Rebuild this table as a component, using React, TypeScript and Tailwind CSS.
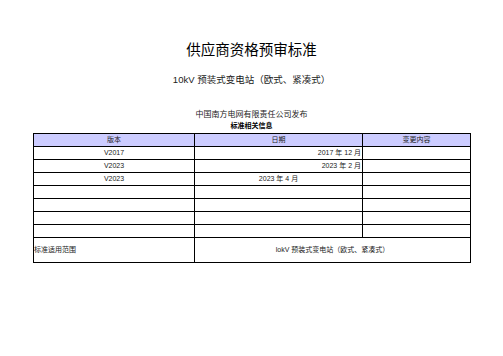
import React from "react";

const font = { fontFamily: '"Liberation Sans", "Noto Sans CJK SC", sans-serif' };

export default function App() {
  const rows: [string, string, "right" | "center"][] = [
    ["V2017", "2017 年 12 月", "right"],
    ["V2023", "2023 年 2 月", "right"],
    ["V2023", "2023 年 4 月", "center"],
    ["", "", "center"],
    ["", "", "center"],
    ["", "", "center"],
    ["", "", "center"],
  ];
  return (
    <div className="w-[503px] h-[356px] bg-white text-black" style={font}>
      <div className="pt-[42px] text-center text-[14.5px] leading-[16px] h-[58px]">供应商资格预审标准</div>
      <div className="mt-[16px] text-center text-[9.5px] leading-[12px] h-[12px] text-[#222]">10kV 预装式变电站（欧式、紧凑式）</div>
      <div className="mt-[24px] text-center text-[8px] leading-[10px] h-[10px] text-[#222]">中国南方电网有限责任公司发布</div>
      <div className="mt-[2px] text-center text-[7px] leading-[8px] h-[8px] font-bold">标准相关信息</div>
      <div className="mt-[3px] ml-[33px] w-[438px] border border-black text-[7px] text-[#222]">
        <div className="flex h-[13px] bg-[#ccccff] border-b border-black">
          <div className="w-[161px] border-r border-black flex items-center justify-center">版本</div>
          <div className="w-[168px] border-r border-black flex items-center justify-center">日期</div>
          <div className="flex-1 flex items-center justify-center">变更内容</div>
        </div>
        {rows.map((r, i) => (
          <div key={i} className="flex h-[13px] border-b border-black">
            <div className="w-[161px] border-r border-black flex items-center justify-center">{r[0]}</div>
            <div
              className={
                r[2] === "right"
                  ? "w-[168px] border-r border-black flex items-center justify-end pr-[1px]"
                  : "w-[168px] border-r border-black flex items-center justify-center"
              }
            >
              {r[1]}
            </div>
            <div className="flex-1"></div>
          </div>
        ))}
        <div className="flex h-[24px]">
          <div className="w-[161px] border-r border-black flex items-center">标准适用范围</div>
          <div className="flex-1 flex items-center justify-center">lokV 预装式变电站（欧式、紧凑式）</div>
        </div>
      </div>
    </div>
  );
}
